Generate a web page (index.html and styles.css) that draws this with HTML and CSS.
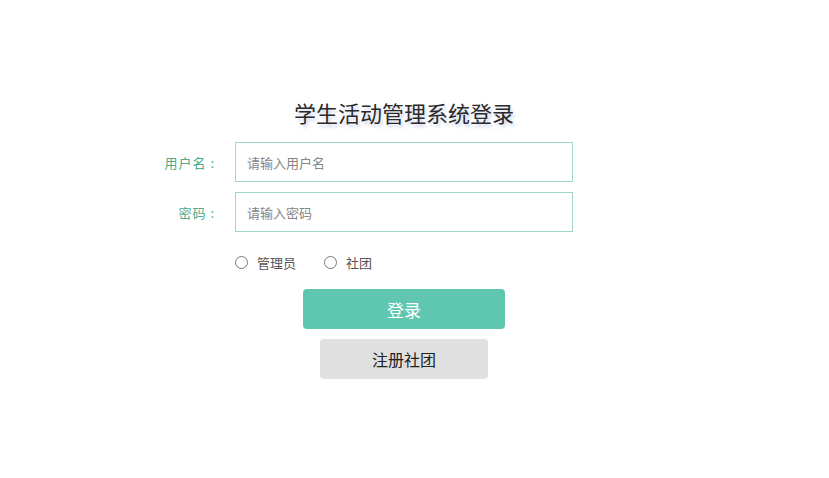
FILE: index.html
```html
<!DOCTYPE html>
<html lang="zh">
<head>
<meta charset="utf-8">
<title>学生活动管理系统登录</title>
<link rel="stylesheet" href="styles.css">
</head>
<body>
<div class="login">
  <h1 class="title">学生活动管理系统登录</h1>
  <div class="row">
    <label class="label">用户名 :</label>
    <input class="field" type="text" placeholder="请输入用户名">
  </div>
  <div class="row">
    <label class="label">密码 :</label>
    <input class="field" type="password" placeholder="请输入密码">
  </div>
  <div class="roles">
    <label class="role"><span class="radio"></span>管理员</label>
    <label class="role"><span class="radio"></span>社团</label>
  </div>
  <div class="actions">
    <button class="btn btn-login">登录</button>
    <button class="btn btn-reg">注册社团</button>
  </div>
</div>
</body>
</html>
```
FILE: styles.css
```css
html, body {
  margin: 0;
  padding: 0;
  background: #fff;
  font-family: "Noto Sans CJK SC", "Noto Sans", sans-serif;
}
.login {
  width: 338px;
  padding-right: 21px;
  margin: 0 auto;
  padding-top: 96px;
}
.title {
  margin: 0 0 14px;
  font-size: 22px;
  line-height: 32px;
  font-weight: normal;
  text-align: center;
  color: #2a2a2a;
  text-shadow: 2px 3px 3px rgba(120, 140, 200, 0.35);
}
.row {
  display: flex;
  align-items: center;
  margin-bottom: 10px;
}
.label {
  width: 90px;
  margin-left: -110px;
  margin-right: 20px;
  text-align: right;
  font-size: 13px;
  letter-spacing: 1px;
  color: #4aab8d;
}
.field {
  box-sizing: border-box;
  width: 338px;
  height: 40px;
  border: 1px solid #9fd9c6;
  padding: 0 11px;
  font-family: inherit;
  font-size: 13px;
  color: #333;
  outline: none;
}
.field::placeholder {
  color: #858585;
}
.roles {
  display: flex;
  gap: 28px;
  margin-top: 22px;
  height: 30px;
}
.role {
  display: flex;
  align-items: flex-start;
  font-size: 13px;
  line-height: 18px;
  color: #555;
}
.radio {
  box-sizing: border-box;
  width: 13px;
  height: 13px;
  border: 1px solid #777;
  border-radius: 50%;
  margin: 2px 9px 0 0;
}
.actions {
  display: flex;
  flex-direction: column;
  align-items: center;
  gap: 10px;
  margin-top: 5px;
}
.btn {
  height: 40px;
  border: none;
  border-radius: 4px;
  font-family: inherit;
  cursor: pointer;
}
.btn-login {
  width: 202px;
  background: #5fc7af;
  color: #fff;
  font-size: 17px;
}
.btn-reg {
  width: 168px;
  background: #e0e0e0;
  color: #222;
  font-size: 16px;
}
```
